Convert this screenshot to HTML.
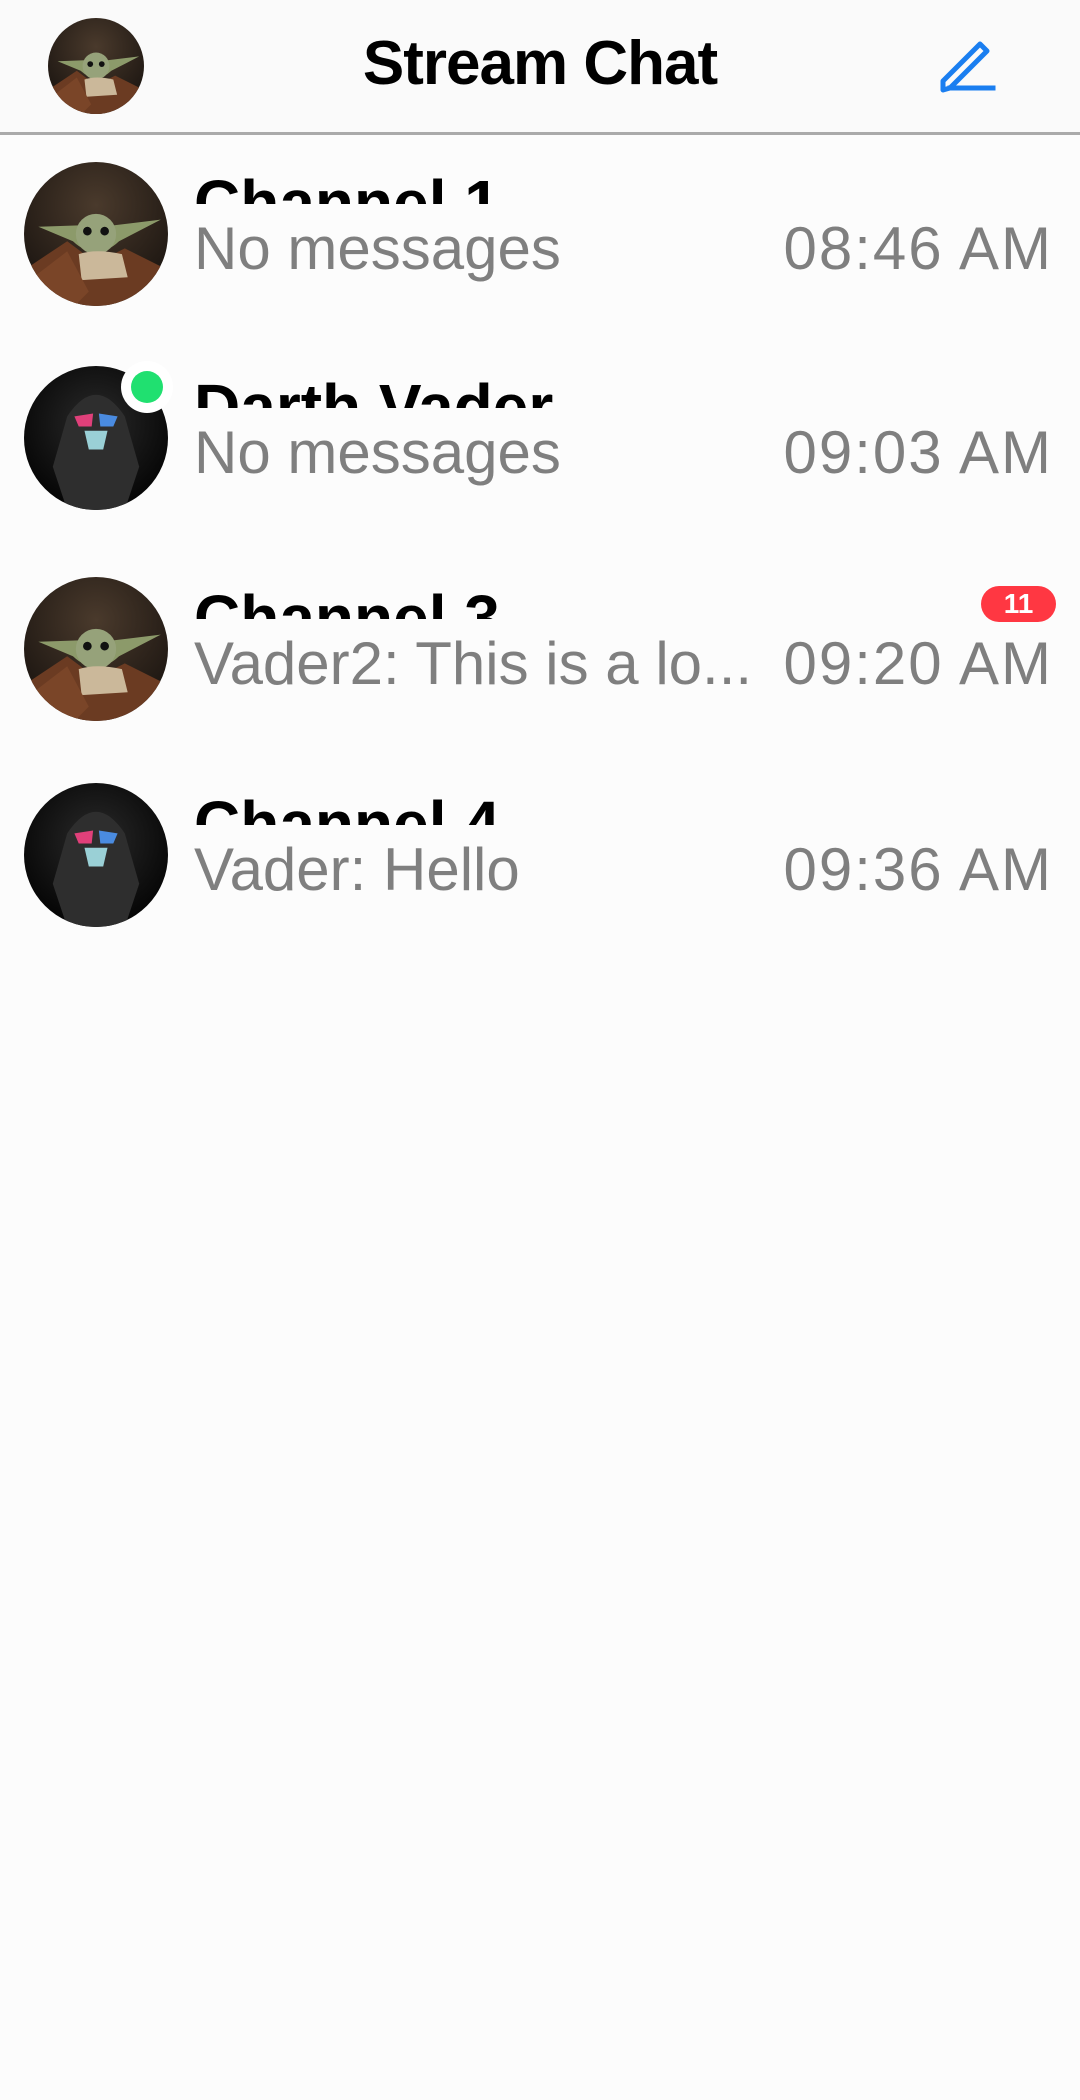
<!DOCTYPE html>
<html><head><meta charset="utf-8">
<style>
html,body{margin:0;padding:0}
body{width:1080px;height:2100px;background:#fcfcfc;font-family:"Liberation Sans",Arial,sans-serif;position:relative;overflow:hidden}
.hdr{position:absolute;left:0;top:0;width:1080px;height:132px;background:#fafafa;border-bottom:3px solid #aaa}
.title{position:absolute;left:0;width:1080px;top:28px;text-align:center;font-weight:bold;font-size:62px;color:#000;letter-spacing:-1px}
.av{position:absolute;border-radius:50%;overflow:hidden}
.name{position:absolute;left:194px;height:32px;overflow:hidden;font-weight:bold;font-size:64px;color:#000;line-height:70px}
.name span{display:block;margin-top:-4px}
.msg{position:absolute;left:194px;font-size:60px;color:#7f7f7f;line-height:60px;white-space:nowrap}
.time{position:absolute;right:27px;font-size:60px;color:#7f7f7f;line-height:60px;letter-spacing:2px}
</style></head><body>
<svg width="0" height="0" style="position:absolute">
<defs>
<radialGradient id="yb" cx="50%" cy="30%" r="70%"><stop offset="0" stop-color="#4a3a2c"/><stop offset="1" stop-color="#1a1410"/></radialGradient>
<radialGradient id="vb" cx="50%" cy="40%" r="60%"><stop offset="0" stop-color="#2a2a2a"/><stop offset="1" stop-color="#050505"/></radialGradient>
<g id="yoda">
<rect width="100" height="100" fill="url(#yb)"/>
<path d="M0 75 L30 55 L50 70 L70 60 L100 75 L100 100 L0 100Z" fill="#6b3b22"/>
<path d="M10 45 L38 44 Q50 30 62 44 L95 40 L66 55 Q50 70 34 55Z" fill="#8c9a6a"/>
<ellipse cx="50" cy="50" rx="14" ry="14" fill="#96a27a"/>
<circle cx="44" cy="48" r="3" fill="#111"/><circle cx="56" cy="48" r="3" fill="#111"/>
<path d="M38 64 Q50 60 68 64 L72 80 L40 82Z" fill="#cbb89a"/>
<path d="M0 85 L30 62 L45 90 L35 100 L0 100Z" fill="#7a4528"/>
</g>
<g id="vader">
<rect width="100" height="100" fill="url(#vb)"/>
<path d="M30 35 Q50 5 70 35 L80 70 L70 100 L30 100 L20 70Z" fill="#2e2e2e"/>
<path d="M35 35 L48 33 L47 42 L38 42Z" fill="#e0407a"/>
<path d="M52 33 L65 35 L62 42 L53 42Z" fill="#4a8be0"/>
<path d="M42 45 L58 45 L55 58 L45 58Z" fill="#9ad0d6"/>
</g>
</defs></svg>

<div class="hdr">
  <svg class="av" style="left:48px;top:18px" width="96" height="96" viewBox="0 0 100 100"><use href="#yoda"/></svg>
  <div class="title">Stream Chat</div>
  <svg style="position:absolute;left:935px;top:36px" width="62" height="60" viewBox="0 0 62 60">
    <path d="M8 54 L8 45 L45 8 L52 15 L15 52 Z" fill="none" stroke="#1a7ef0" stroke-width="5" stroke-linejoin="round"/>
    <path d="M15 52 L58 52" stroke="#1a7ef0" stroke-width="5" stroke-linecap="square"/>
  </svg>
</div>

<svg class="av" style="left:24px;top:162px" width="144" height="144" viewBox="0 0 100 100"><use href="#yoda"/></svg>
<div class="name" style="top:172px"><span>Channel 1</span></div>
<div class="msg" style="top:219px">No messages</div>
<div class="time" style="top:219px">08:46 AM</div>

<svg class="av" style="left:24px;top:366px" width="144" height="144" viewBox="0 0 100 100"><use href="#vader"/></svg>
<div style="position:absolute;left:121px;top:361px;width:52px;height:52px;border-radius:50%;background:#fff"></div>
<div style="position:absolute;left:131px;top:371px;width:32px;height:32px;border-radius:50%;background:#20e070"></div>
<div class="name" style="top:376px"><span>Darth Vader</span></div>
<div class="msg" style="top:423px">No messages</div>
<div class="time" style="top:423px">09:03 AM</div>

<svg class="av" style="left:24px;top:577px" width="144" height="144" viewBox="0 0 100 100"><use href="#yoda"/></svg>
<div class="name" style="top:587px"><span>Channel 3</span></div>
<div style="position:absolute;left:981px;top:586px;width:75px;height:36px;border-radius:18px;background:#ff3742;color:#fff;font-weight:bold;font-size:28px;line-height:36px;text-align:center">11</div>
<div class="msg" style="top:634px">Vader2: This is a lo...</div>
<div class="time" style="top:634px">09:20 AM</div>

<svg class="av" style="left:24px;top:783px" width="144" height="144" viewBox="0 0 100 100"><use href="#vader"/></svg>
<div class="name" style="top:793px"><span>Channel 4</span></div>
<div class="msg" style="top:840px">Vader: Hello</div>
<div class="time" style="top:840px">09:36 AM</div>
</body></html>
